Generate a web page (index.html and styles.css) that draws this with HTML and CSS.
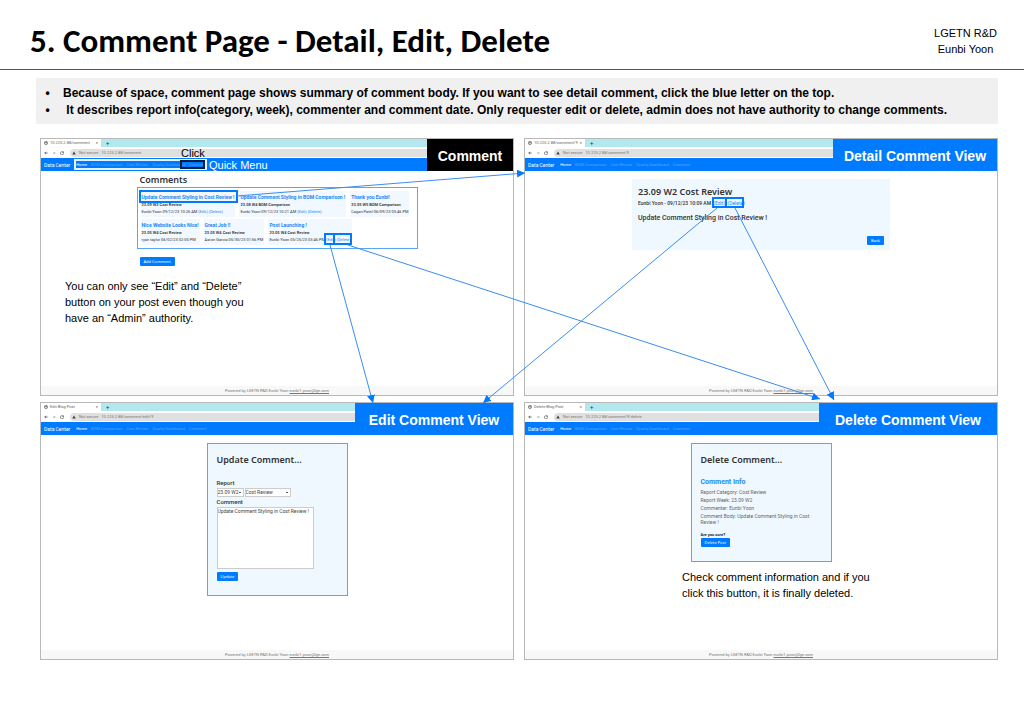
FILE: index.html
```html
<!DOCTYPE html>
<html lang="en">
<head>
<meta charset="utf-8">
<title>5. Comment Page - Detail, Edit, Delete</title>
<link rel="stylesheet" href="styles.css">
</head>
<body>
<svg class="defs" width="0" height="0" aria-hidden="true">
  <symbol id="globe" viewBox="0 0 10 10"><circle cx="5" cy="5" r="4" fill="none" stroke="#555" stroke-width="1.6"/><path d="M2 3l3 2 3-3M4 8l2-2" fill="none" stroke="#555" stroke-width="1.6"/></symbol>
  <symbol id="back" viewBox="0 0 10 10"><path d="M9 5H2M5 2L2 5l3 3" fill="none" stroke="#444" stroke-width="1.8"/></symbol>
  <symbol id="forward" viewBox="0 0 10 10"><path d="M2 5h6M5 2l3 3-3 3" fill="none" stroke="#999" stroke-width="1.4"/></symbol>
  <symbol id="reload" viewBox="0 0 10 10"><path d="M8 3A4 4 0 1 0 9 6M9 1v3H6" fill="none" stroke="#444" stroke-width="1.6"/></symbol>
  <symbol id="warn" viewBox="0 0 10 10"><path d="M5 1l4.500 8h-9z" fill="#444"/></symbol>
</svg>
<header class="slide-header">
  <h1 class="slide-title">5. Comment Page - Detail, Edit, Delete</h1>
  <p class="author">LGETN R&amp;D<br>Eunbi Yoon</p>
</header>
<main class="slide-body">
  <ul class="summary">
    <li>Because of space, comment page shows summary of comment body. If you want to see detail comment, click the blue letter on the top.</li>
    <li>&nbsp;It describes report info(category, week), commenter and comment date. Only requester edit or delete, admin does not have authority to change comments.</li>
  </ul>
  <div class="board">
    <section class="window">
      <div class="tabs"><div class="tab"><svg class="ico"><use href="#globe"/></svg><span class="tab-name">10.225.2.88/comment</span><span>×</span></div><span class="plus">+</span></div>
      <div class="address"><svg class="ico"><use href="#back"/></svg><svg class="ico"><use href="#forward"/></svg><svg class="ico"><use href="#reload"/></svg><div class="url"><svg class="ico"><use href="#warn"/></svg><span>Not secure</span><span>10.225.2.88/comment</span></div></div>
      <nav class="nav"><a class="brand" href="#">Data Center</a><a class="on" href="#">Home</a><a href="#">BOM Comparison</a><a href="#">Cost Review</a><a href="#">Quality Dashboard</a><a href="#">Comment</a></nav>
      <h2 class="label dark">Comment</h2>
      <div class="content wide">
        <h3 class="page-title">Comments</h3>
        <div class="cards">
          <div class="card-row">
            <article class="card"><a class="card-title" href="#">Update Comment Styling in Cost Review !</a><b>23.09 W2 Cost Review</b><p>Eunbi Yoon 09/12/23 10:26 AM <a href="#">(Edit)</a> <a href="#">(Delete)</a></p></article>
            <article class="card"><a class="card-title" href="#">Update Comment Styling in BOM Comparison !</a><b>23.08 W4 BOM Comparison</b><p>Eunbi Yoon 09/12/23 10:21 AM <a href="#">(Edit)</a> <a href="#">(Delete)</a></p></article>
            <article class="card"><a class="card-title" href="#">Thank you Eunbi!</a><b>23.05 W5 BOM Comparison</b><p>Cagan Patel 06/09/23 03:46 PM</p></article>
          </div>
          <div class="card-row">
            <article class="card"><a class="card-title" href="#">Nice Website Looks Nice!</a><b>23.05 W4 Cost Review</b><p>ryan taylor 06/02/23 02:05 PM</p></article>
            <article class="card"><a class="card-title" href="#">Great Job !!</a><b>23.05 W4 Cost Review</b><p>Aaron Garcia 05/30/23 01:56 PM</p></article>
            <article class="card"><a class="card-title" href="#">Post Launching !</a><b>23.05 W4 Cost Review</b><p>Eunbi Yoon 05/25/23 03:46 PM <a href="#">(Edit)</a> <a href="#">(Delete)</a></p></article>
          </div>
        </div>
        <button class="btn add" type="button">Add Comment</button>
      </div>
      <p class="note side">You can only see “Edit” and “Delete” button on your post even though you have an “Admin” authority.</p>
      <footer class="foot">Powered by LGETN R&amp;D Eunbi Yoon <a href="#">eunbi1.yoon@lge.com</a></footer>
    </section>

    <section class="window">
      <div class="tabs"><div class="tab"><svg class="ico"><use href="#globe"/></svg><span class="tab-name">10.225.2.88/comment/9</span><span>×</span></div><span class="plus">+</span></div>
      <div class="address"><svg class="ico"><use href="#back"/></svg><svg class="ico"><use href="#forward"/></svg><svg class="ico"><use href="#reload"/></svg><div class="url"><svg class="ico"><use href="#warn"/></svg><span>Not secure</span><span>10.225.2.88/comment/9</span></div></div>
      <nav class="nav"><a class="brand" href="#">Data Center</a><a class="on" href="#">Home</a><a href="#">BOM Comparison</a><a href="#">Cost Review</a><a href="#">Quality Dashboard</a><a href="#">Comment</a></nav>
      <h2 class="label detail-label">Detail Comment View</h2>
      <div class="content detail">
        <h3 class="page-title">23.09 W2 Cost Review</h3>
        <p class="byline">Eunbi Yoon - 09/12/23 10:09 AM <a href="#">(Edit)</a> <a href="#">(Delete)</a></p>
        <p class="body-text">Update Comment Styling in Cost Review !</p>
        <button class="btn back" type="button">Back</button>
      </div>
      <footer class="foot">Powered by LGETN R&amp;D Eunbi Yoon <a href="#">eunbi1.yoon@lge.com</a></footer>
    </section>

    <section class="window">
      <div class="tabs"><div class="tab"><svg class="ico"><use href="#globe"/></svg><span class="tab-name">Edit Blog Post</span><span>×</span></div><span class="plus">+</span></div>
      <div class="address"><svg class="ico"><use href="#back"/></svg><svg class="ico"><use href="#forward"/></svg><svg class="ico"><use href="#reload"/></svg><div class="url"><svg class="ico"><use href="#warn"/></svg><span>Not secure</span><span>10.225.2.88/comment/edit/9</span></div></div>
      <nav class="nav"><a class="brand" href="#">Data Center</a><a class="on" href="#">Home</a><a href="#">BOM Comparison</a><a href="#">Cost Review</a><a href="#">Quality Dashboard</a><a href="#">Comment</a></nav>
      <h2 class="label edit-label">Edit Comment View</h2>
      <form class="content panel update">
        <h3 class="page-title">Update Comment...</h3>
        <label class="field" for="week">Report</label>
        <div class="selects">
          <select class="week" id="week"><option>23.09 W2</option></select>
          <select class="category" aria-label="Category"><option>Cost Review</option></select>
        </div>
        <label class="field" for="comment">Comment</label>
        <textarea id="comment">Update Comment Styling in Cost Review !</textarea>
        <button class="btn" type="button">Update</button>
      </form>
      <footer class="foot">Powered by LGETN R&amp;D Eunbi Yoon <a href="#">eunbi1.yoon@lge.com</a></footer>
    </section>

    <section class="window">
      <div class="tabs"><div class="tab"><svg class="ico"><use href="#globe"/></svg><span class="tab-name">Delete Blog Post</span><span>×</span></div><span class="plus">+</span></div>
      <div class="address"><svg class="ico"><use href="#back"/></svg><svg class="ico"><use href="#forward"/></svg><svg class="ico"><use href="#reload"/></svg><div class="url"><svg class="ico"><use href="#warn"/></svg><span>Not secure</span><span>10.225.2.88/comment/9/delete</span></div></div>
      <nav class="nav"><a class="brand" href="#">Data Center</a><a class="on" href="#">Home</a><a href="#">BOM Comparison</a><a href="#">Cost Review</a><a href="#">Quality Dashboard</a><a href="#">Comment</a></nav>
      <h2 class="label delete-label">Delete Comment View</h2>
      <div class="content panel remove">
        <h3 class="page-title">Delete Comment...</h3>
        <h4 class="info">Comment Info</h4>
        <p>Report Category: Cost Review</p>
        <p>Report Week: 23.09 W2</p>
        <p>Commenter: Eunbi Yoon</p>
        <p class="last">Comment Body: Update Comment Styling in Cost Review !</p>
        <b class="sure">Are you sure?</b>
        <button class="btn" type="button">Delete Post</button>
      </div>
      <p class="note under">Check comment information and if you click this button, it is finally deleted.</p>
      <footer class="foot">Powered by LGETN R&amp;D Eunbi Yoon <a href="#">eunbi1.yoon@lge.com</a></footer>
    </section>

    <span class="callout click">Click</span>
    <span class="callout quick">Quick Menu</span>
    <svg class="arrows" viewBox="0 0 958 522" preserveAspectRatio="none" aria-hidden="true">
      <defs><marker id="head" markerUnits="userSpaceOnUse" markerWidth="8" markerHeight="8" refX="8" refY="4" orient="auto"><path d="M0 0l8 4-8 4z" fill="#007bff"/></marker></defs>
      <rect x="35" y="22" width="131" height="9" fill="none" stroke="#e4f3ff" stroke-width="2"/>
      <rect x="141" y="23" width="23" height="7" fill="none" stroke="#001c3a" stroke-width="2"/>
      <g fill="none" stroke="#007bff" stroke-width="2">
        <rect x="100" y="53" width="97" height="11"/>
        <rect x="285" y="96" width="9" height="10"/>
        <rect x="294" y="96" width="17" height="10"/>
        <rect x="673" y="60" width="13" height="9"/>
        <rect x="686" y="60" width="17" height="9"/>
      </g>
      <g fill="none" stroke="#3b8cf0" stroke-width="1">
        <path d="M197 58L485 35" marker-end="url(#head)"/>
        <path d="M290 107L333 265" marker-end="url(#head)"/>
        <path d="M308 107L780 261" marker-end="url(#head)"/>
        <path d="M677 70L443 265" marker-end="url(#head)"/>
        <path d="M695 70L794 262" marker-end="url(#head)"/>
      </g>
    </svg>
  </div>
</main>
</body>
</html>
```
FILE: styles.css
```css
* { box-sizing: border-box; }
body { margin: 0; background: #fff; color: #000; font-family: "Liberation Sans", Arial, sans-serif; }
h1, h2, h3, h4, p, ul { margin: 0; padding: 0; }
a { color: inherit; text-decoration: none; }
.defs { display: block; }
.slide-header { display: flex; justify-content: space-between; align-items: center; height: 70px; padding: 12px 27px 0 30px; border-bottom: 1px solid #555; }
.slide-title { font: bold 33px/40px Carlito, Calibri, sans-serif; }
.author { font-size: 11px; line-height: 16px; text-align: center; }
.slide-body { padding: 8px 26px 48px 36px; }
.summary { background: #f0f0f0; padding: 7px 0 5px 27px; font-size: 12px; font-weight: bold; line-height: 17px; list-style-type: "•\00a0\00a0\00a0\00a0"; }
.board { position: relative; display: grid; grid-template-columns: 1fr 1fr; gap: 6px 10px; margin: 14px 0 0 4px; }
.window { position: relative; display: flex; flex-direction: column; min-height: 258px; border: 1px solid #b8b8b8; font-family: Roboto, "Noto Sans", sans-serif; color: #333; }
.tabs { display: flex; align-items: center; height: 8px; background: #b3e8ee; font-size: 4px; line-height: 8px; }
.tab { display: flex; align-items: center; gap: 2px; width: 60px; height: 8px; padding: 0 3px; background: #fff; color: #666; }
.tab-name { flex: 1; }
.plus { padding-left: 5px; font-size: 6px; }
.ico { width: 4px; height: 4px; flex: none; }
.address { display: flex; align-items: center; gap: 4px; height: 11px; padding: 1px 0 1px 3px; }
.url { display: flex; align-items: center; gap: 3px; flex: 1; height: 8px; margin-left: 2px; padding-left: 2px; border-radius: 4px 0 0 4px; background: #e0e0e0; color: #777; font-size: 4px; }
.nav { display: flex; align-items: center; gap: 4px; height: 13px; padding-left: 3px; background: #007bff; color: #55a5ff; font-size: 4px; }
.nav .brand { color: #fff; font-size: 5px; margin-right: 2px; }
.nav .on { color: #fff; }
.label { position: absolute; top: 0; right: 0; width: 86px; height: 32px; background: #007bff; color: #fff; font: bold 14px/34px "Liberation Sans", Arial, sans-serif; text-align: center; }
.dark { background: #000; }
.detail-label { width: 164px; }
.edit-label { width: 158px; }
.delete-label { width: 178px; }
.content { align-self: center; width: 100%; }
.page-title { font: 600 9px/12px "Noto Sans", sans-serif; }
.wide { max-width: 281px; padding-top: 3px; }
.wide .page-title { padding-left: 3px; }
.cards { display: flex; flex-direction: column; gap: 2px; margin-top: 1px; padding: 3px; border: 1px solid #5aa5f5; }
.card-row { display: flex; gap: 4px; }
.card { padding: 2px 1px; background: #f2f8ff; font-size: 4px; line-height: 7px; white-space: nowrap; }
.card-title { display: block; color: #2588f5; font-size: 5px; line-height: 8px; font-weight: 700; }
.card b { display: block; font-weight: 600; }
.card p a, .byline a { color: #2588f5; }
.btn { display: block; border: 0; border-radius: 1px; padding: 0 4px; height: 9px; background: #007bff; color: #fff; font: 4px/9px "Noto Sans", sans-serif; }
.add { margin: 8px 0 0 3px; }
.note { font-size: 11px; line-height: 16px; font-family: "Liberation Sans", Arial, sans-serif; color: #000; }
.side { width: 188px; margin: 12px 0 0 24px; }
.foot { margin-top: auto; height: 9px; background: #f8f8f8; color: #777; text-align: center; font-size: 4px; line-height: 9px; }
.foot a { text-decoration: underline; }
.detail { max-width: 258px; margin-top: 8px; padding: 7px 6px 5px; background: #f0f8ff; }
.byline { font-size: 5px; line-height: 10px; font-weight: 500; }
.byline a { font-weight: 400; margin-left: 1px; }
.body-text { margin-top: 6px; font-size: 7px; line-height: 9px; font-weight: 500; }
.back { margin: 13px 0 0 auto; }
.panel { max-width: 141px; margin-top: 8px; border: 1px solid #5aa5f5; background: #f0f8ff; padding: 9px 9px 14px; }
.panel .page-title { line-height: 14px; }
.field { display: block; font-size: 6px; line-height: 8px; font-weight: 500; }
.page-title + .field { margin-top: 12px; }
.selects { display: flex; gap: 1px; margin: 1px 0; }
select, textarea { border: 1px solid #ccc; border-radius: 0; background: #fff; color: #444; font: 5px/7px Roboto, "Noto Sans", sans-serif; padding: 0; }
select { height: 9px; appearance: none; background: linear-gradient(#555, #555) right 2px center / 2px 1px no-repeat #fff; }
.week { width: 27px; }
.category { width: 46px; }
textarea { display: block; width: 97px; height: 62px; margin: 1px 0 3px; resize: none; }
.remove { font-size: 5px; line-height: 8px; color: #666; }
.remove .page-title { color: #333; }
.info { margin: 11px 0 2px; color: #2588f5; font-size: 7px; line-height: 8px; }
.remove .last { line-height: 6px; margin-top: 1px; }
.sure { display: block; margin-top: 7px; color: #222; font-size: 4px; line-height: 6px; }
.under { width: 196px; margin: 7px 0 0 157px; }
.callout { position: absolute; font-size: 11px; line-height: 14px; }
.click { left: 141px; top: 8px; }
.quick { left: 169px; top: 20px; color: #fff; }
.arrows { position: absolute; inset: 0; width: 100%; height: 100%; pointer-events: none; overflow: visible; }
```
